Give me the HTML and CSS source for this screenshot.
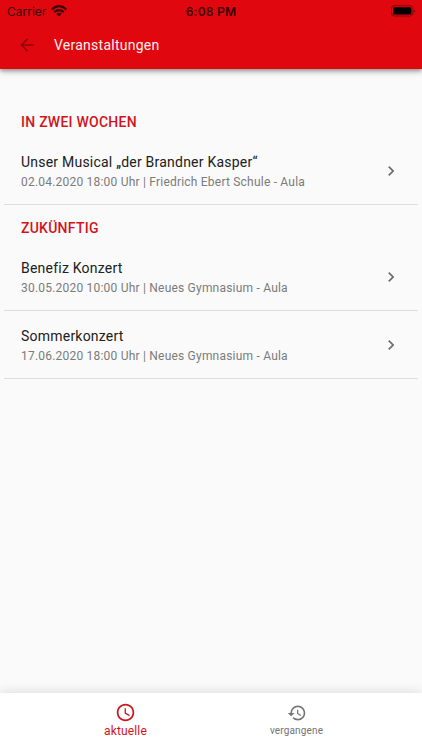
FILE: index.html
```html
<!DOCTYPE html>
<html lang="de">
<head>
<meta charset="utf-8">
<title>Veranstaltungen</title>
<link rel="stylesheet" href="styles.css">
</head>
<body>
<div class="screen">
  <header class="header">
    <div class="status">
      <div class="carrier"><span class="carrier-name">Carrier</span>
        <svg class="wifi" viewBox="0 0 16 12"><g fill="none" stroke="currentColor" stroke-width="2.2"><path d="M.8 4.3Q8-1.9 15.2 4.3"/><path d="M3.3 7.1Q8 3.1 12.7 7.1"/></g><path d="M5.4 8.8Q8 6.9 10.6 8.8L8 11.6z" fill="currentColor"/></svg>
      </div>
      <time class="clock">6:08 PM</time>
      <div class="power">
        <svg class="battery" viewBox="0 0 25 12"><rect x=".5" y=".8" width="21.4" height="10.2" rx="2.8" fill="none" stroke="#85050a"/><rect x="2" y="2.3" width="18.4" height="7.2" rx="1.5"/><path d="M23.2 4.3v3.2q1-.5 1-1.6t-1-1.6z" fill="#85050a"/></svg>
      </div>
    </div>
    <div class="toolbar">
      <svg class="back" viewBox="0 0 24 24"><path fill="currentColor" d="M20 11H7.83l5.59-5.59L12 4l-8 8 8 8 1.41-1.41L7.83 13H20v-2z"/></svg>
      <h1 class="title">Veranstaltungen</h1>
    </div>
  </header>
  <main class="content">
    <h2 class="section">In zwei Wochen</h2>
    <div class="row">
      <div class="info"><div class="name">Unser Musical „der Brandner Kasper“</div><div class="meta">02.04.2020 18:00 Uhr | Friedrich Ebert Schule - Aula</div></div>
      <svg class="chevron" viewBox="0 0 24 24"><path fill="currentColor" d="M10 6L8.59 7.41 13.17 12l-4.58 4.59L10 18l6-6z"/></svg>
    </div>
    <h2 class="section">Zukünftig</h2>
    <div class="row">
      <div class="info"><div class="name">Benefiz Konzert</div><div class="meta">30.05.2020 10:00 Uhr | Neues Gymnasium - Aula</div></div>
      <svg class="chevron" viewBox="0 0 24 24"><path fill="currentColor" d="M10 6L8.59 7.41 13.17 12l-4.58 4.59L10 18l6-6z"/></svg>
    </div>
    <div class="row">
      <div class="info"><div class="name">Sommerkonzert</div><div class="meta">17.06.2020 18:00 Uhr | Neues Gymnasium - Aula</div></div>
      <svg class="chevron" viewBox="0 0 24 24"><path fill="currentColor" d="M10 6L8.59 7.41 13.17 12l-4.58 4.59L10 18l6-6z"/></svg>
    </div>
  </main>
  <nav class="tabs">
    <div class="tab active">
      <svg class="tab-icon" viewBox="0 0 24 24"><path fill="currentColor" d="M11.99 2C6.47 2 2 6.48 2 12s4.47 10 9.99 10C17.52 22 22 17.52 22 12S17.52 2 11.99 2zM12 20c-4.42 0-8-3.58-8-8s3.58-8 8-8 8 3.58 8 8-3.58 8-8 8zM12.5 7H11v6l5.25 3.15.75-1.23-4.5-2.67z"/></svg>
      <span class="tab-label">aktuelle</span>
    </div>
    <div class="tab">
      <svg class="tab-icon" viewBox="0 0 24 24"><path fill="currentColor" d="M13 3a9 9 0 0 0-9 9H1l3.89 3.89.07.14L9 12H6c0-3.87 3.13-7 7-7s7 3.13 7 7-3.13 7-7 7c-1.93 0-3.68-.79-4.94-2.06l-1.42 1.42A8.954 8.954 0 0 0 13 21a9 9 0 0 0 0-18zm-1 5v5l4.28 2.54.72-1.21-3.5-2.08V8H12z"/></svg>
      <span class="tab-label">vergangene</span>
    </div>
  </nav>
</div>
</body>
</html>
```
FILE: styles.css
```css
* { box-sizing: border-box; }
body { margin: 0; font-family: Roboto, sans-serif; background: #fafafa; }
.screen { width: 422px; height: 750px; display: flex; flex-direction: column; overflow: hidden; }
.header { height: 69px; flex: none; background: #e1070e; box-shadow: 0 2px 4px rgba(0,0,0,.35), 0 3px 8px rgba(0,0,0,.12); }
.status { height: 22px; padding: 0 7px 0 7px; display: grid; grid-template-columns: 1fr auto 1fr; align-items: center; font-family: Inter, sans-serif; color: #390204; }
.carrier { display: flex; align-items: center; gap: 5px; font-size: 12px; }
.carrier-name { letter-spacing: 0; }
.wifi { width: 16px; height: 12px; margin-top: -1px; }
.clock { font-size: 12px; font-weight: 600; letter-spacing: .25px; }
.power { display: flex; justify-content: flex-end; }
.battery { width: 25px; height: 12px; margin: -1px -1px 0 0; }
.toolbar { height: 46px; padding: 0 17px; display: flex; align-items: center; gap: 17px; }
.back { width: 20px; height: 20px; color: #8c080c; }
.title { margin: 0; font-size: 14px; font-weight: 400; line-height: 20px; letter-spacing: .25px; color: #fff0f0; }
.content { flex: 1; padding: 30px 4px 0; }
.section { margin: 0; height: 38px; padding: 13px 17px 0; font-size: 14px; line-height: 20px; font-weight: 500; letter-spacing: .25px; text-transform: uppercase; color: #d1141b; }
.row { height: 68px; padding: 15px 17px 0 17px; display: flex; justify-content: space-between; border-bottom: 1px solid #dedede; }
.name { font-size: 14px; line-height: 20px; letter-spacing: .22px; color: #202020; white-space: nowrap; }
.meta { font-size: 12px; line-height: 20px; letter-spacing: .21px; color: #7b7b7b; white-space: nowrap; }
.chevron { width: 20px; height: 20px; margin: 9px .5px 0 0; color: #6c6c6c; }
.tabs { height: 57px; flex: none; padding: 0 40px; display: flex; background: #fff; box-shadow: 0 -2px 10px rgba(0,0,0,.1); }
.tab { flex: 1; padding-top: 10px; display: flex; flex-direction: column; align-items: center; color: #747474; font-size: 10px; }
.active { color: #d1141b; font-size: 12px; padding-top: 9px; }
.active .tab-label { margin-top: 1px; }
.tab-icon { width: 20px; height: 20px; }
.active .tab-icon { width: 21px; height: 21px; margin-bottom: -1px; }
.tab-label { line-height: 16px; letter-spacing: .15px; }
```
